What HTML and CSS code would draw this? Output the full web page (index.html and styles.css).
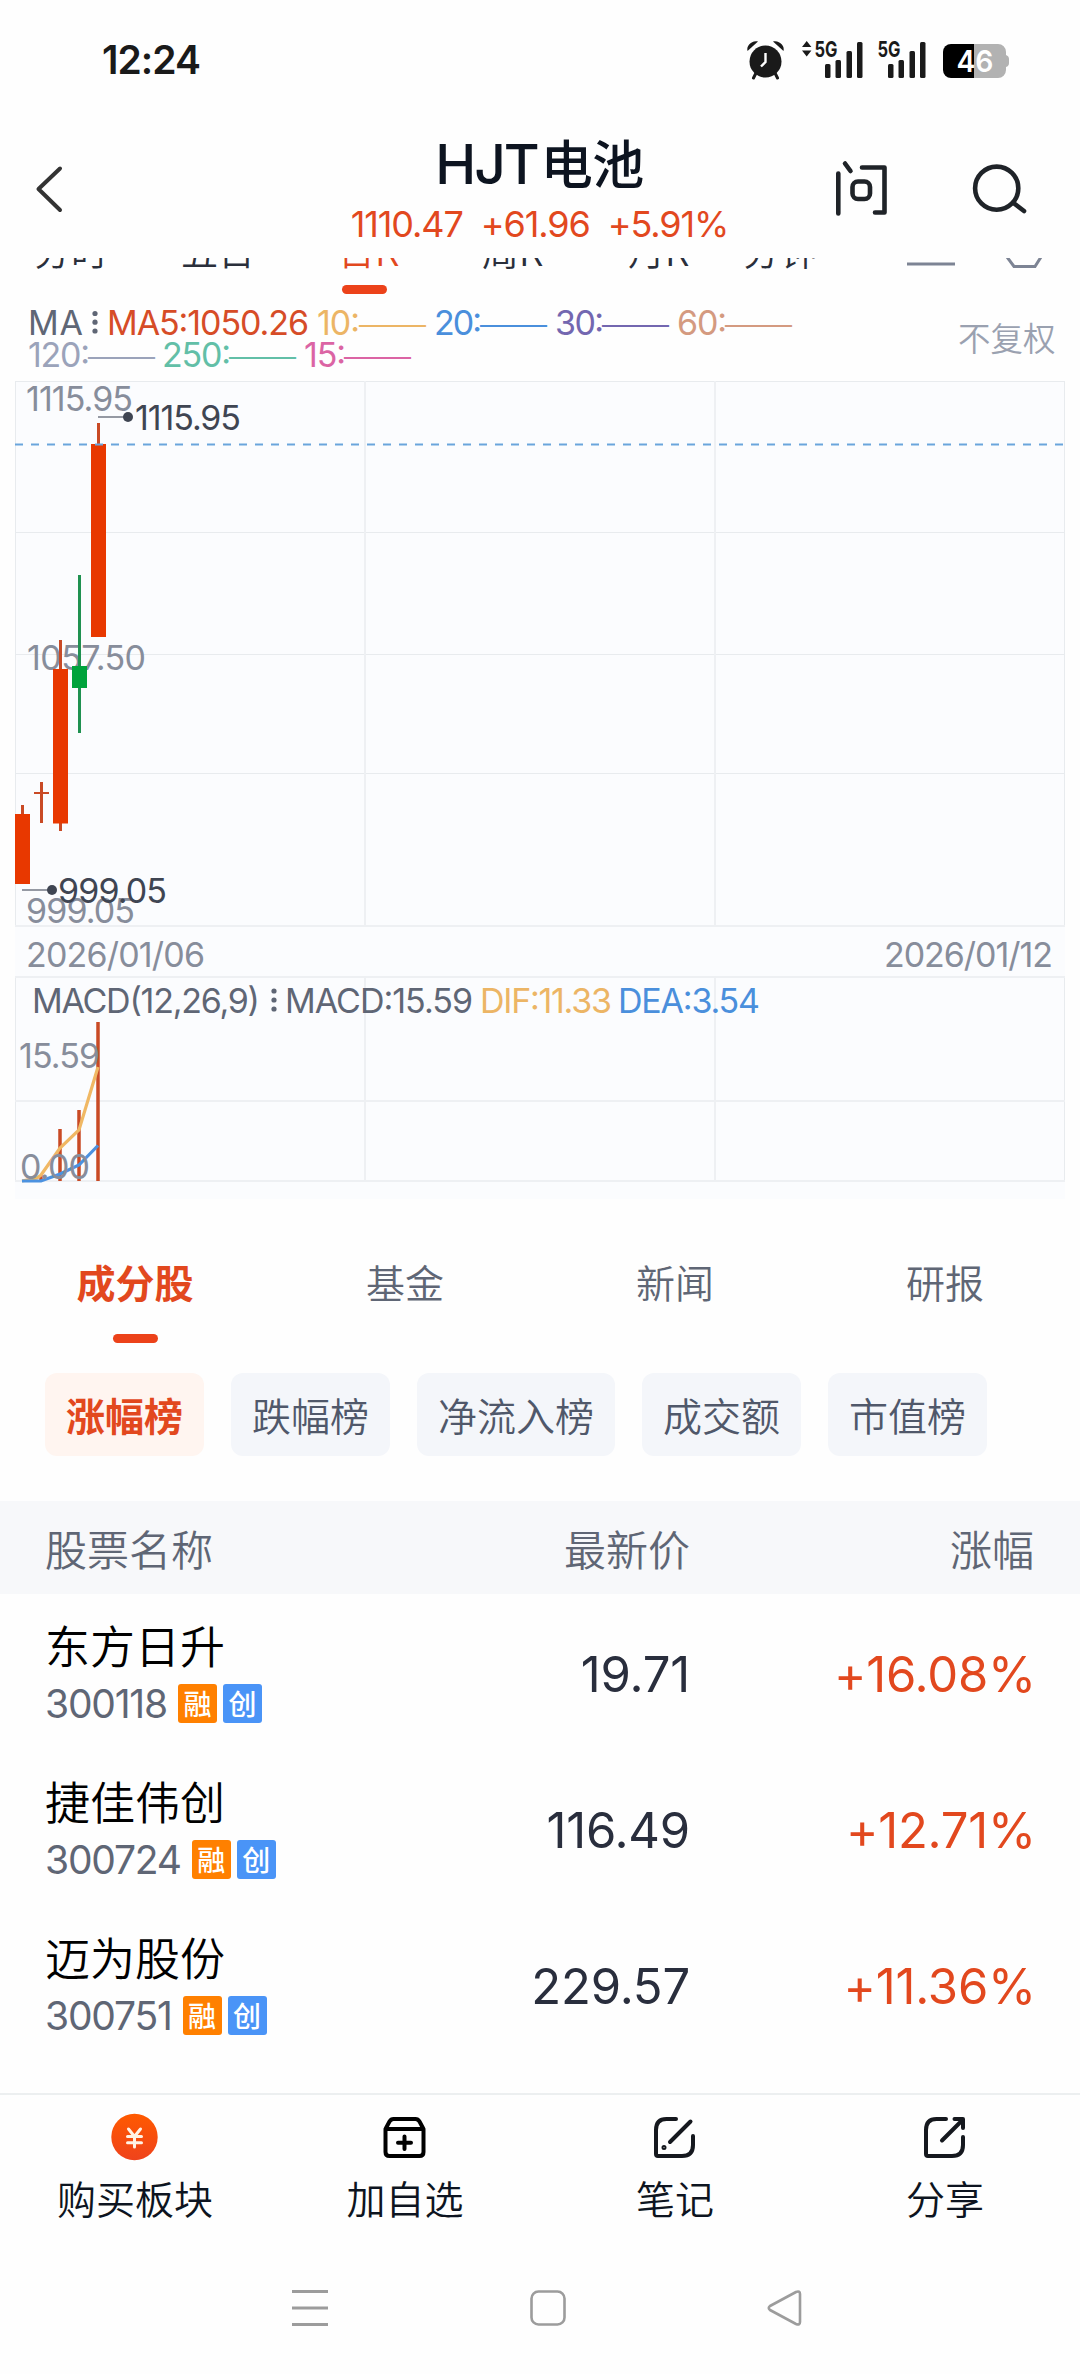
FILE: index.html
```html
<!DOCTYPE html>
<html lang="zh-CN">
<head>
    <meta charset="UTF-8">
    <meta name="viewport" content="width=device-width, initial-scale=1.0">
    <title>HJT电池</title>
    <link rel="stylesheet" href="styles.css">
</head>
<body>
    <div class="status-bar">
        <span class="clock">12:24</span>
        <svg class="status-icons" width="270" height="44" viewBox="745 38 270 44">
            <!-- alarm -->
            <g fill="#1a1a1a">
                <circle cx="765.5" cy="61.5" r="16"/>
                <path d="M747.5 51c-1.500-5 4-11 10.500-9.500z"/>
                <path d="M783.500 51c1.500-5-4-11-10.500-9.500z"/>
            </g>
            <path d="M756 73l-2.500 5M775 73l2.500 5" stroke="#1a1a1a" stroke-width="3" stroke-linecap="round"/>
            <path d="M765.500 53v9l-4.500 4.500" fill="none" stroke="#fff" stroke-width="2.400"/>
            <!-- sim 1 -->
            <path d="M802 47l4.700-6 4.700 6zM802 50.500l4.700 6 4.700-6z" fill="#1a1a1a"/>
            <text class="net" x="814.500" y="57" textLength="23" lengthAdjust="spacingAndGlyphs">5G</text>
            <g fill="#1a1a1a">
                <rect x="825" y="64" width="5.500" height="14" rx="1.500"/>
                <rect x="835.500" y="60" width="5.500" height="18" rx="1.500"/>
                <rect x="846.500" y="51" width="5.500" height="27" rx="1.500"/>
                <rect x="857" y="42" width="5.500" height="36" rx="1.500"/>
            </g>
            <!-- sim 2 -->
            <text class="net" x="877.500" y="57" textLength="23" lengthAdjust="spacingAndGlyphs">5G</text>
            <g fill="#1a1a1a">
                <rect x="888" y="64" width="5.500" height="14" rx="1.500"/>
                <rect x="898.500" y="60" width="5.500" height="18" rx="1.500"/>
                <rect x="909.500" y="51" width="5.500" height="27" rx="1.500"/>
                <rect x="920" y="42" width="5.500" height="36" rx="1.500"/>
            </g>
            <!-- battery -->
            <path d="M974 44h24a8 8 0 0 1 8 8v3q3 1 3 4v4q0 3-3 4v3a8 8 0 0 1-8 8h-24z" fill="#b2b2b2"/>
            <path d="M974 44h-23a8 8 0 0 0-8 8v18a8 8 0 0 0 8 8h23z" fill="#000"/>
            <text class="battery" x="956.500" y="72" textLength="37" lengthAdjust="spacingAndGlyphs">46</text>
        </svg>
    </div>

    <header class="header">
        <svg class="back" width="30" height="52" viewBox="34 163 30 52">
            <path d="M60 168.500L38.500 189 60 210" fill="none" stroke="#333" stroke-width="4" stroke-linecap="round" stroke-linejoin="round"/>
        </svg>
        <div class="heading">
            <h1><span class="latin">HJT</span>电池</h1>
            <div class="quote"><span>1110.47</span><span>+61.96</span><span>+5.91%</span></div>
        </div>
        <svg class="actions" width="200" height="60" viewBox="832 158 200 60" fill="none" stroke="#1f2328" stroke-width="4.600" stroke-linecap="round" stroke-linejoin="round">
            <path d="M838.300 173.500v40M845 163.500l5.500 7.500M862 167.500h22.500v45h-9.500"/>
            <rect x="852.500" y="181.500" width="17.500" height="17.500" rx="5.500"/>
            <circle cx="996.700" cy="188.200" r="21.600"/>
            <path d="M1013.500 203l10.500 8"/>
        </svg>
    </header>

    <nav class="periods">
        <span>分时</span>
        <span>五日</span>
        <span class="active">日K</span>
        <span>周K</span>
        <span>月K</span>
        <span>分钟</span>
        <svg width="140" height="12" viewBox="905 258 140 12" fill="none" stroke="#7d8494" stroke-width="3">
            <path d="M907 264h48M1007 257l7 9.500h21l6-9.500"/>
        </svg>
    </nav>
    <div class="period-mark"></div>

    <svg class="chart" width="1080" height="899" viewBox="0 300 1080 899">
        <!-- MA legend -->
        <g class="legend">
            <text class="c-label" x="28" y="334.500" textLength="55">MA</text>
            <text class="c-red" x="107" y="334.500" textLength="202">MA5:1050.26</text>
            <text class="c-yellow" x="317" y="334.500" textLength="43">10:</text>
            <text class="c-yellow dash" x="357" y="334.500" textLength="71" lengthAdjust="spacingAndGlyphs">——</text>
            <text class="c-blue" x="434" y="334.500" textLength="48">20:</text>
            <text class="c-blue dash" x="478" y="334.500" textLength="71" lengthAdjust="spacingAndGlyphs">——</text>
            <text class="c-purple" x="555" y="334.500" textLength="49">30:</text>
            <text class="c-purple dash" x="600" y="334.500" textLength="71" lengthAdjust="spacingAndGlyphs">——</text>
            <text class="c-brown" x="677" y="334.500" textLength="50">60:</text>
            <text class="c-brown dash" x="723" y="334.500" textLength="71" lengthAdjust="spacingAndGlyphs">——</text>
            <text class="c-gray" x="28" y="366.500" textLength="62">120:</text>
            <text class="c-gray dash" x="86" y="366.500" textLength="71" lengthAdjust="spacingAndGlyphs">——</text>
            <text class="c-green" x="162" y="366.500" textLength="69">250:</text>
            <text class="c-green dash" x="227" y="366.500" textLength="71" lengthAdjust="spacingAndGlyphs">——</text>
            <text class="c-pink" x="304" y="366.500" textLength="42">15:</text>
            <text class="c-pink dash" x="342" y="366.500" textLength="71" lengthAdjust="spacingAndGlyphs">——</text>
            <text class="adjust" x="958" y="350.500">不复权</text>
        </g>
        <g fill="#5f6675">
            <circle cx="95" cy="313.500" r="2.600"/>
            <circle cx="95" cy="322.200" r="2.600"/>
            <circle cx="95" cy="331" r="2.600"/>
        </g>

        <!-- panels and grid -->
        <rect x="15" y="381" width="1050" height="818" fill="#fbfcfe"/>
        <path class="grid" d="M15.500 381V926M1064.500 381V926M15.500 977V1181M1064.500 977V1181M15 381.500H1065M15 532.500H1065M15 654.500H1065M15 773.500H1065"/>
        <path class="grid wide" d="M365 381V926M715 381V926M15 926H1065M15 977H1065M365 977V1181M715 977V1181M15 1101H1065M15 1181H1065"/>

        <!-- price axis -->
        <g class="axis">
            <text x="26" y="411" textLength="107">1115.95</text>
            <text x="27" y="669.500" textLength="119">1057.50</text>
            <text x="26" y="922.500" textLength="109">999.05</text>
            <text x="26" y="966.500" textLength="179">2026/01/06</text>
            <text x="884" y="966.500" textLength="169">2026/01/12</text>
        </g>

        <!-- candles -->
        <g class="wick-up">
            <path d="M22.500 805V815M41.500 782V823M60.500 640V831M98.500 423V445"/>
            <path d="M34 793H49" stroke-width="2"/>
        </g>
        <path d="M79.500 575V733" stroke="#1f9150" stroke-width="3"/>
        <g fill="#e83800">
            <rect x="15" y="814" width="15" height="70"/>
            <rect x="53" y="669" width="15" height="154.500"/>
            <rect x="91" y="444" width="15" height="193"/>
        </g>
        <rect x="72" y="666" width="15" height="22" fill="#00a33b"/>
        <path d="M15 444.500H1064" stroke="#6aa5dc" stroke-width="2" stroke-dasharray="8 8"/>

        <!-- high and low callouts -->
        <path d="M98 417H124M22 890H48" stroke="#9599a3" stroke-width="2"/>
        <g class="callout">
            <circle cx="128" cy="417" r="5"/>
            <text x="135" y="429.500" textLength="106">1115.95</text>
            <circle cx="52" cy="890" r="5"/>
            <text x="58" y="902.500" textLength="109">999.05</text>
        </g>

        <!-- MACD -->
        <g class="legend">
            <text class="c-label" x="32" y="1012.500" textLength="228">MACD(12,26,9)</text>
            <text class="c-label" x="285" y="1012.500" textLength="188">MACD:15.59</text>
            <text class="c-yellow" x="480" y="1012.500" textLength="132">DIF:11.33</text>
            <text class="c-blue" x="618" y="1012.500" textLength="142">DEA:3.54</text>
        </g>
        <g fill="#5f6675">
            <circle cx="274" cy="991" r="2.600"/>
            <circle cx="274" cy="1000" r="2.600"/>
            <circle cx="274" cy="1009" r="2.600"/>
        </g>
        <path d="M41 1175V1181M60 1129V1181M79 1110V1181M98 1022V1181" stroke="#c94a25" stroke-width="3.500"/>
        <g fill="none" stroke-width="3.200">
            <path d="M22 1181L37 1178L41 1175L60 1148L79 1130L98 1067" stroke="#f0b864"/>
            <path d="M22 1181H41L60 1174L79 1165L98 1145.500" stroke="#4c92e0"/>
        </g>
        <g class="axis">
            <text x="19" y="1067.500" textLength="81">15.59</text>
            <text x="20" y="1179" textLength="70">0.00</text>
        </g>
    </svg>

    <nav class="tabs">
        <span class="tab active">成分股</span>
        <span class="tab">基金</span>
        <span class="tab">新闻</span>
        <span class="tab">研报</span>
    </nav>

    <div class="chips">
        <span class="chip active">涨幅榜</span>
        <span class="chip">跌幅榜</span>
        <span class="chip">净流入榜</span>
        <span class="chip">成交额</span>
        <span class="chip">市值榜</span>
    </div>

    <div class="row table-head">
        <span>股票名称</span>
        <span class="right">最新价</span>
        <span class="right">涨幅</span>
    </div>
    <div class="row stock">
        <div>
            <div class="name">东方日升</div>
            <div class="code"><span class="num">300118</span><i class="badge rong">融</i><i class="badge chuang">创</i></div>
        </div>
        <span class="price">19.71</span>
        <span class="change">+16.08%</span>
    </div>
    <div class="row stock">
        <div>
            <div class="name">捷佳伟创</div>
            <div class="code"><span class="num">300724</span><i class="badge rong">融</i><i class="badge chuang">创</i></div>
        </div>
        <span class="price">116.49</span>
        <span class="change">+12.71%</span>
    </div>
    <div class="row stock">
        <div>
            <div class="name">迈为股份</div>
            <div class="code"><span class="num">300751</span><i class="badge rong">融</i><i class="badge chuang">创</i></div>
        </div>
        <span class="price">229.57</span>
        <span class="change">+11.36%</span>
    </div>

    <footer class="toolbar">
        <div class="tool">
            <svg width="50" height="50" viewBox="0 0 50 50">
                <defs>
                    <linearGradient id="coin" x1="0" y1="0" x2="0" y2="1">
                        <stop offset="0" stop-color="#ff5a00"/>
                        <stop offset="1" stop-color="#ef431c"/>
                    </linearGradient>
                </defs>
                <circle cx="24.500" cy="25" r="23.200" fill="url(#coin)"/>
                <path d="M18.500 17l6 7.500 6-7.500M24.500 24.500v10.500M17.500 24.500h14M17.500 30.700h14" fill="none" stroke="#fff3e6" stroke-width="3" stroke-linecap="round"/>
            </svg>
            <span>购买板块</span>
        </div>
        <div class="tool">
            <svg width="50" height="50" viewBox="0 0 50 50" fill="none" stroke="#000" stroke-width="4" stroke-linecap="round" stroke-linejoin="round">
                <path d="M5.500 17v23q0 4 4 4h30q4 0 4-4V17l-4-7.500q-1.500-2.500-4-2.500h-22q-2.500 0-4 2.500zM5.500 17h38M24.500 24.500v12.500M18 30.700h13"/>
            </svg>
            <span>加自选</span>
        </div>
        <div class="tool">
            <svg width="50" height="50" viewBox="0 0 50 50" fill="none" stroke="#15181e" stroke-width="4" stroke-linecap="round" stroke-linejoin="round">
                <path d="M26 7h-9.500Q6 7 6 18v24q0 2 2 2h24Q43 44 43 33V24M40.500 9.500L20 30"/>
                <circle cx="14" cy="35.500" r="1" stroke-width="3"/>
            </svg>
            <span>笔记</span>
        </div>
        <div class="tool">
            <svg width="50" height="50" viewBox="0 0 50 50" fill="none" stroke="#15181e" stroke-width="4" stroke-linecap="round" stroke-linejoin="round">
                <path d="M26 7h-9.500Q6 7 6 18v24q0 2 2 2h24Q43 44 43 33V25M22 28.500L42 8.500M34.500 7H43v9"/>
            </svg>
            <span>分享</span>
        </div>
    </footer>

    <div class="system-nav">
        <svg width="40" height="40" viewBox="0 0 40 40" stroke="#9c9c9c" stroke-width="3">
            <path d="M2 3.500h36M2 20h36M2 36.500h36"/>
        </svg>
        <svg width="40" height="40" viewBox="0 0 40 40" fill="none" stroke="#9c9c9c" stroke-width="2.600">
            <rect x="3.500" y="3.500" width="33" height="33" rx="7"/>
        </svg>
        <svg width="40" height="40" viewBox="0 0 40 40" fill="none" stroke="#9c9c9c" stroke-width="2.600" stroke-linejoin="round">
            <path d="M4 18l26-14q4-1.500 4 2v28q0 3.500-4 2L4 22q-2.500-2 0-4z"/>
        </svg>
    </div>
</body>
</html>
```
FILE: styles.css
```css
:root { --red: #e2481e; --text: #0d1420; --gray: #5f6675; --latin: Inter, "Noto Sans CJK SC", sans-serif; --cjk: "Noto Sans CJK SC", sans-serif; }
* { box-sizing: border-box; }
body { margin: 0; width: 1080px; height: 2374px; overflow: hidden; background: #fefefe; color: var(--text); font-family: var(--cjk); font-weight: 350; }
svg { display: block; flex: none; }

.status-bar { height: 120px; padding: 38px 65px 0 102px; display: flex; justify-content: space-between; align-items: flex-start; }
.clock { font: 600 39px/44px var(--latin); color: #1a1a1a; letter-spacing: -1px; }
.status-icons { overflow: visible; }
.net { font: 700 22px var(--latin); fill: #1a1a1a; }
.battery { font: 600 30px var(--latin); fill: #fff; }

.header { height: 138px; padding: 0 48px 0 34px; display: flex; justify-content: space-between; }
.back { margin-top: 43px; }
.actions { margin-top: 38px; }
.heading { padding: 7px 0 0 183px; text-align: center; }
.heading h1 { margin: 0; font-size: 52px; line-height: 70px; font-weight: 500; letter-spacing: -0.5px; }
.heading .latin { font-family: var(--latin); font-size: 55px; letter-spacing: -2px; margin-right: 3px; }
.quote { display: flex; justify-content: center; gap: 18px; font: 400 36px/44px var(--latin); letter-spacing: -1.1px; color: var(--red); margin-top: 3px; }

/* strip scrolled under the header, only its lower edge shows */
.periods { height: 12px; overflow: hidden; display: grid; grid-template: 12px / 147px 157px 144px 146px 115px 162px 140px; align-items: end; padding-left: 34px; font-size: 37px; line-height: 54px; color: #2a2f3b; }
.periods span { margin-bottom: -7px; }
.periods .active { color: var(--red); }
.period-mark { width: 45px; height: 9px; border-radius: 5px; background: #ec421a; margin: 15px 0 6px 342px; }

.legend text, .axis text, .callout text { font: 400 34px var(--latin); }
.legend .dash { font: 400 33px var(--cjk); }
.legend .adjust { font: 350 32.5px var(--cjk); fill: #9aa1b0; }
.c-label { fill: #5f6675; }
.c-red { fill: #d64c27; }
.c-yellow { fill: #ecb565; }
.c-blue { fill: #4a8fdc; }
.c-purple { fill: #7367b0; }
.c-brown { fill: #d49a80; }
.c-gray { fill: #9ba3ba; }
.c-green { fill: #62bfa7; }
.c-pink { fill: #db64a4; }
.axis text { fill: #878d9b; }
.callout { fill: #3f4552; }
.grid { fill: none; stroke: #e8ebee; stroke-width: 1; }
.grid.wide { stroke: #eef0f3; stroke-width: 2; }
.wick-up { fill: none; stroke: #c94a25; stroke-width: 3; }

.tabs { display: grid; grid-template-columns: repeat(4, 1fr); height: 174px; padding-top: 53px; text-align: center; font-size: 39px; line-height: 58px; color: var(--gray); }
.tab.active { color: var(--red); font-weight: 700; }
.tab.active::after { content: ""; display: block; width: 45px; height: 9px; margin: 24px auto 0; border-radius: 5px; background: #ec421a; }

.chips { display: flex; gap: 27px; padding-left: 45px; height: 128px; }
.chip { height: 83px; padding: 0 21px; border-radius: 12px; background: #f4f6fa; color: #50586a; font-size: 39px; line-height: 82px; }
.chip.active { background: #fff5f0; color: var(--red); font-weight: 700; }

.row { display: grid; grid-template-columns: 345px 300px 344px; padding: 0 46px 0 45px; }
.right { text-align: right; }
.table-head { height: 93px; background: #f7f8fa; color: var(--gray); font-size: 42px; line-height: 93px; }
.stock { height: 156px; padding-top: 18px; }
.name { font-size: 45px; line-height: 66px; color: #000; }
.code { display: flex; align-items: center; height: 42px; margin-top: 4px; }
.num { font: 400 39px/44px var(--latin); letter-spacing: -1.2px; color: var(--gray); margin-right: 11px; padding-top: 2px; }
.badge { width: 39px; height: 39px; margin-right: 6px; border-radius: 3px; color: #fff; font-style: normal; font-weight: 500; font-size: 28px; line-height: 38px; text-align: center; }
.rong { background: #ff8000; }
.chuang { background: #4a94f7; }
.price, .change { font: 400 49px/126px var(--latin); text-align: right; }
.price { color: #292e3d; letter-spacing: -0.2px; }
.change { color: var(--red); letter-spacing: -0.2px; margin-right: -2px; }

.toolbar { margin-top: 31px; height: 160px; border-top: 2px solid #eceff0; display: grid; grid-template-columns: repeat(4, 1fr); }
.tool { display: flex; flex-direction: column; align-items: center; padding-top: 17px; font-size: 39px; line-height: 58px; }
.tool span { margin-top: 6px; }
.system-nav { display: flex; gap: 198px; padding: 35px 0 0 290px; }
```
